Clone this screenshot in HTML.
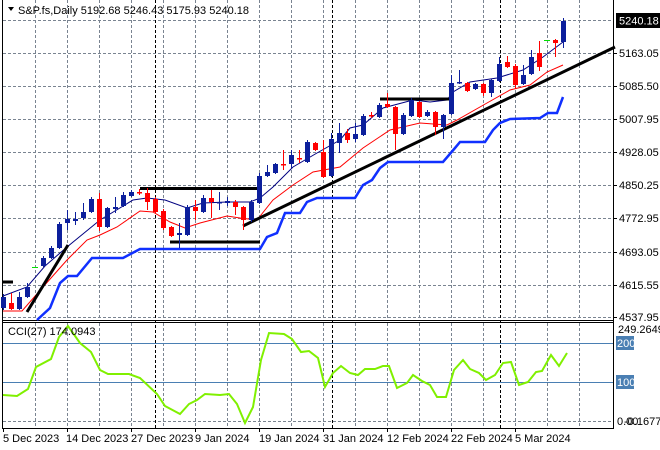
<!DOCTYPE html>
<html><head><meta charset="utf-8"><style>
html,body{margin:0;padding:0;background:#fff;width:660px;height:450px;overflow:hidden}
svg{display:block}
text{font-family:"Liberation Sans",sans-serif;font-size:11px;fill:#000}
</style></head><body>
<svg width="660" height="450" viewBox="0 0 660 450" xmlns="http://www.w3.org/2000/svg">
<rect width="660" height="450" fill="#fff"/>
<g stroke="#7a8491" stroke-width="1" stroke-dasharray="3,2" fill="none">
<path d="M3 20.5H613M3 53.5H613M3 86.5H613M3 119.5H613M3 152.5H613M3 185.5H613M3 218.5H613M3 252.5H613M3 285.5H613M3 317.5H613M3 421.5H613"/>
<path d="M35.5 0V320M67.5 0V320M99.5 0V320M131.5 0V320M163.5 0V320M195.5 0V320M227.5 0V320M259.5 0V320M291.5 0V320M323.5 0V320M355.5 0V320M387.5 0V320M419.5 0V320M451.5 0V320M483.5 0V320M515.5 0V320M547.5 0V320M579.5 0V320"/>
<path d="M35.5 323V428M67.5 323V428M99.5 323V428M131.5 323V428M163.5 323V428M195.5 323V428M227.5 323V428M259.5 323V428M291.5 323V428M323.5 323V428M355.5 323V428M387.5 323V428M419.5 323V428M451.5 323V428M483.5 323V428M515.5 323V428M547.5 323V428M579.5 323V428"/>
</g>
<g stroke="#000" stroke-width="1" stroke-dasharray="3,2">
<path d="M155.5 0V428M332.5 0V428M500.5 0V428"/>
</g>
<g stroke="#000" stroke-width="1" fill="none">
<path d="M2.5 0V428.5H613.5V0"/>
<path d="M2 320.5H614M2 322.5H614"/>
</g>
<path d="M3 343.5H613M3 382.5H613" stroke="#4a7fb3" stroke-width="1"/>
<polyline fill="none" stroke="#1030ff" stroke-width="2.5" points="37,320 50,308 60,283 68,276 77,276 92,258 123,258 140,249 260,249 267,237 277,233 285,213 300,213 307,202 317,198 355,198 363,185 372,180 380,168 388,162 443,162 455,148 460,142 485,142 493,130 500,123 510,119 540,118 548,113 557,113 563,97"/>
<polyline fill="none" stroke="#ff0000" stroke-width="1" points="3,311 22,311 43,287 67,260 87,240 100,235 117,227 140,211 153,212 170,222 185,228 200,223 227,216 240,218 257,220 273,200 293,185 313,172 340,167 363,148 390,130 420,123 447,125 457,120 487,103 510,90 530,85 547,72 563,65"/>
<polyline fill="none" stroke="#000080" stroke-width="1" points="3,296 27,287 45,266 67,247 100,220 133,200 147,198 165,200 187,208 203,203 227,202 250,202 260,198 273,187 293,167 317,153 340,140 350,128 363,125 383,108 413,100 430,102 447,100 453,92 470,82 497,78 523,70 543,57 563,42"/>
<g stroke="#000" stroke-width="3" fill="none">
<path d="M27 312L68 245"/>
<path d="M243 226L615 47"/>
<path d="M140 188.5H258M170 242H260M380 99H450M2 282H13"/>
</g>
<g>
<g stroke="#0c1f9c" fill="#0c1f9c">
<path d="M3.5 294V310M19.5 292V310M27.5 283V298M43.5 256V267M51.5 246V259M59.5 222V249M67.5 210V230M75.5 212V225M83.5 203V220M91.5 197V213M107.5 207V228M115.5 197V213M123.5 192V207M131.5 190V197M179.5 223V248M187.5 205V236M203.5 195V213M219.5 192V210M227.5 197V206M251.5 200V222M259.5 173V204M267.5 165V177M275.5 163V174M291.5 150V168M307.5 140V163M331.5 133V177M339.5 123V153M355.5 123V142M363.5 114V136M379.5 103V118M403.5 113V135M411.5 98V117M427.5 110V117M443.5 114V139M451.5 75V115M459.5 70V84M475.5 83V90M491.5 79V97M499.5 57V82M523.5 65V85M531.5 50V75M563.5 18V48" stroke-width="1"/>
</g>
<g fill="#0c1f9c" stroke="none">
<rect x="1" y="297" width="5" height="11"/><rect x="17" y="297" width="5" height="12"/><rect x="25" y="287" width="5" height="10"/>
<rect x="41" y="258" width="5" height="8"/><rect x="49" y="248" width="5" height="10"/><rect x="57" y="224" width="5" height="24"/>
<rect x="65" y="219" width="5" height="4"/><rect x="73" y="219" width="5" height="2"/><rect x="81" y="212" width="5" height="6"/>
<rect x="89" y="199" width="5" height="13"/><rect x="105" y="208" width="5" height="19"/><rect x="113" y="207" width="5" height="2"/>
<rect x="121" y="195" width="5" height="11"/><rect x="129" y="192" width="5" height="4"/><rect x="177" y="233" width="5" height="2"/>
<rect x="185" y="207" width="5" height="28"/><rect x="201" y="198" width="5" height="14"/><rect x="217" y="202" width="5" height="1.5"/>
<rect x="225" y="201" width="5" height="2"/><rect x="249" y="202" width="5" height="18"/><rect x="257" y="176" width="5" height="27"/>
<rect x="265" y="172" width="5" height="4"/><rect x="273" y="164" width="5" height="9"/><rect x="289" y="155" width="5" height="9"/>
<rect x="305" y="142" width="5" height="20"/><rect x="329" y="139" width="5" height="37"/><rect x="337" y="133" width="5" height="10"/>
<rect x="353" y="134" width="5" height="5"/><rect x="361" y="116" width="5" height="19"/><rect x="377" y="105" width="5" height="12"/>
<rect x="401" y="115" width="5" height="19"/><rect x="409" y="100" width="5" height="16"/><rect x="425" y="112" width="5" height="4"/>
<rect x="441" y="115" width="5" height="12"/><rect x="449" y="83" width="5" height="31"/><rect x="457" y="82" width="5" height="1.5"/>
<rect x="473" y="84" width="5" height="5"/><rect x="489" y="80" width="5" height="13"/><rect x="497" y="64" width="5" height="17"/>
<rect x="521" y="75" width="5" height="9"/><rect x="529" y="57" width="5" height="17"/><rect x="561" y="21" width="5" height="21"/>
</g>
<g stroke="#ff0000" fill="none" stroke-width="1">
<path d="M11.5 293V310M99.5 193V231M139.5 189V195M147.5 188V210M155.5 197V213M163.5 209V230M171.5 226V237M195.5 200V220M211.5 190V218M235.5 200V215M243.5 206V230M283.5 150V170M299.5 150V163M315.5 142V151M323.5 140V178M347.5 129V143M371.5 112V118M387.5 93V108M395.5 106V150M419.5 101V118M435.5 111V135M467.5 82V92M483.5 83V96M507.5 56V68M515.5 64V89M539.5 41V71M555.5 39V57"/>
</g>
<g fill="#ff0000">
<rect x="9" y="303" width="5" height="6"/><rect x="97" y="199" width="5" height="28"/><rect x="137" y="192" width="5" height="1.5"/>
<rect x="145" y="193" width="5" height="9"/><rect x="153" y="199" width="5" height="13"/><rect x="161" y="211" width="5" height="17"/>
<rect x="169" y="227" width="5" height="9"/><rect x="193" y="207" width="5" height="4"/><rect x="209" y="198" width="5" height="4"/>
<rect x="233" y="202" width="5" height="5"/><rect x="241" y="207" width="5" height="13"/><rect x="281" y="164" width="5" height="1.5"/>
<rect x="297" y="158" width="5" height="1.5"/><rect x="313" y="143" width="5" height="7"/><rect x="321" y="152" width="5" height="25"/>
<rect x="345" y="133" width="5" height="7"/><rect x="369" y="115" width="5" height="1.5"/><rect x="385" y="104" width="5" height="3"/>
<rect x="393" y="107" width="5" height="27"/><rect x="417" y="102" width="5" height="15"/><rect x="433" y="112" width="5" height="15"/>
<rect x="465" y="83" width="5" height="8"/><rect x="481" y="84" width="5" height="9"/><rect x="505" y="62" width="5" height="5"/>
<rect x="513" y="66" width="5" height="19"/><rect x="537" y="53" width="5" height="14"/><rect x="553" y="40" width="5" height="3"/>
</g>
<path d="M32 267.5H38M544 40.5H550" stroke="#00e000" stroke-width="1"/>
</g>
<polyline fill="none" stroke="#80f000" stroke-width="2" points="3,395 17,396 28,389 36,367 51,359 59,337 68,326 80,343 91,352 100,370 108,374 129,374 140,378 157,394 165,406 180,414 189,404 197,400 205,394 220,395 229,394 237,404 245,423 253,407 261,360 269,333 284,334 292,339 301,352 309,351 318,358 325,387 333,373 341,366 350,373 358,375 365,369 375,369 383,366 389,366 397,388 407,383 413,375 422,381 430,385 437,397 446,397 454,370 463,360 470,369 479,373 486,380 495,375 503,363 511,362 519,385 528,382 536,372 542,371 551,355 559,366 567,353"/>
<path d="M8 7H14L11 11Z" fill="#000"/>
<text x="18" y="14">S&amp;P.fs,Daily  5192.68 5246.43 5175.93 5240.18</text>
<text x="8" y="335" font-size="10">CCI(27) 174.0943</text>
<g>
<path d="M613 53.5H617M613 86.5H617M613 119.5H617M613 152.5H617M613 185.5H617M613 218.5H617M613 252.5H617M613 285.5H617M613 317.5H617" stroke="#000"/>
<rect x="616" y="13" width="44" height="15" fill="#000"/>
<text x="619" y="24.5" style="fill:#fff">5240.18</text>
<text x="619" y="57">5163.05</text>
<text x="619" y="90">5085.50</text>
<text x="619" y="123">5007.95</text>
<text x="619" y="156">4928.05</text>
<text x="619" y="189">4850.25</text>
<text x="619" y="222">4772.95</text>
<text x="619" y="256">4693.05</text>
<text x="619" y="289">4615.55</text>
<text x="619" y="321">4537.95</text>
<text x="618" y="333">249.2649</text>
<rect x="616" y="336" width="18" height="14" fill="#4a7fb3"/>
<text x="617" y="347" style="fill:#fff">200</text>
<rect x="616" y="375" width="18" height="14" fill="#4a7fb3"/>
<text x="617" y="386" style="fill:#fff">100</text>
<text x="617" y="425">0.00</text>
<text x="624" y="425">-0.1677</text>
</g>
<path d="M3.5 428V432M67.5 428V432M131.5 428V432M195.5 428V432M259.5 428V432M323.5 428V432M387.5 428V432M451.5 428V432M515.5 428V432" stroke="#000"/>
<g font-size="10">
<text x="3" y="442">5 Dec 2023</text>
<text x="66" y="442">14 Dec 2023</text>
<text x="131" y="442">27 Dec 2023</text>
<text x="195" y="442">9 Jan 2024</text>
<text x="259" y="442">19 Jan 2024</text>
<text x="323" y="442">31 Jan 2024</text>
<text x="387" y="442">12 Feb 2024</text>
<text x="451" y="442">22 Feb 2024</text>
<text x="515" y="442">5 Mar 2024</text>
</g>
</svg>
</body></html>
